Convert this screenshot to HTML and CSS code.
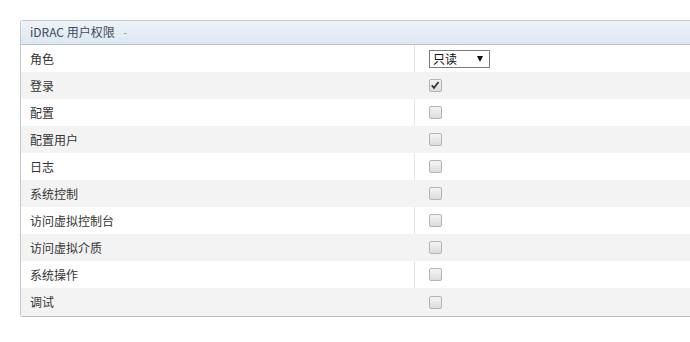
FILE: index.html
```html
<!DOCTYPE html>
<html lang="zh">
<head>
<meta charset="utf-8">
<link rel="stylesheet" href="styles.css">
</head>
<body>
<div class="panel">
  <div class="panel-head">iDRAC 用户权限 <span class="collapse">-</span></div>
  <div class="row">
    <div class="label">角色</div>
    <div class="value"><div class="select">只读<span class="arrow"></span></div></div>
  </div>
  <div class="row alt">
    <div class="label">登录</div>
    <div class="value"><span class="cb checked"><svg viewBox="0 0 12 12" width="12" height="12"><path d="M2.8 6.4 L5 8.8 L9.6 3" fill="none" stroke="#333" stroke-width="1.8"/></svg></span></div>
  </div>
  <div class="row">
    <div class="label">配置</div>
    <div class="value"><span class="cb"></span></div>
  </div>
  <div class="row alt">
    <div class="label">配置用户</div>
    <div class="value"><span class="cb"></span></div>
  </div>
  <div class="row">
    <div class="label">日志</div>
    <div class="value"><span class="cb"></span></div>
  </div>
  <div class="row alt">
    <div class="label">系统控制</div>
    <div class="value"><span class="cb"></span></div>
  </div>
  <div class="row">
    <div class="label">访问虚拟控制台</div>
    <div class="value"><span class="cb"></span></div>
  </div>
  <div class="row alt">
    <div class="label">访问虚拟介质</div>
    <div class="value"><span class="cb"></span></div>
  </div>
  <div class="row">
    <div class="label">系统操作</div>
    <div class="value"><span class="cb"></span></div>
  </div>
  <div class="row alt">
    <div class="label">调试</div>
    <div class="value"><span class="cb"></span></div>
  </div>
</div>
</body>
</html>
```
FILE: styles.css
```css
html, body {
  margin: 0;
  padding: 0;
  background: #fff;
}
body {
  padding: 20px 0 0 20px;
  font-family: "Noto Sans CJK SC", "Liberation Sans", sans-serif;
  font-size: 12px;
  color: #333;
  overflow: hidden;
}
.panel {
  width: 690px;
  border: 1px solid #c8c8c8;
  border-right: none;
  border-bottom-color: #bdbdbd;
  border-radius: 3px 0 0 3px;
  box-shadow: 0 2px 2px rgba(0,0,0,0.07);
}
.panel-head {
  height: 23px;
  line-height: 22px;
  padding-left: 9px;
  background: linear-gradient(#edf3f9, #dde7f1);
  border-bottom: 1px solid #b8c2cc;
  color: #3d4a57;
  font-size: 12px;
}
.collapse {
  color: #9aa6b2;
  margin-left: 6px;
}
.row {
  display: flex;
  height: 27px;
  align-items: stretch;
  background: #fff;
}
.row:last-child {
  height: 28px;
}
.row.alt {
  background: #f3f3f3;
}
.label {
  width: 384px;
  padding-left: 9px;
  line-height: 27px;
  border-right: 1px solid #e6e6e6;
}
.row.alt .label {
  border-right-color: #f3f3f3;
}
.value {
  flex: 1;
  display: flex;
  align-items: center;
  padding-left: 14px;
}
.cb {
  display: inline-block;
  width: 11px;
  height: 11px;
  border: 1px solid #b4b4b4;
  border-radius: 2px;
  background: linear-gradient(#f4f4f4, #dcdcdc);
  position: relative;
}
.cb svg {
  position: absolute;
  left: -1px;
  top: -1px;
}
.select {
  width: 56px;
  height: 16px;
  border: 1px solid #7a7a7a;
  line-height: 16px;
  padding-left: 3px;
  box-sizing: content-box;
  display: flex;
  justify-content: space-between;
  align-items: center;
  color: #111;
  font-size: 12px;
  background: #fff;
}
.arrow {
  width: 0;
  height: 0;
  border-left: 3.5px solid transparent;
  border-right: 3.5px solid transparent;
  border-top: 6px solid #111;
  margin-right: 6px;
}
```
